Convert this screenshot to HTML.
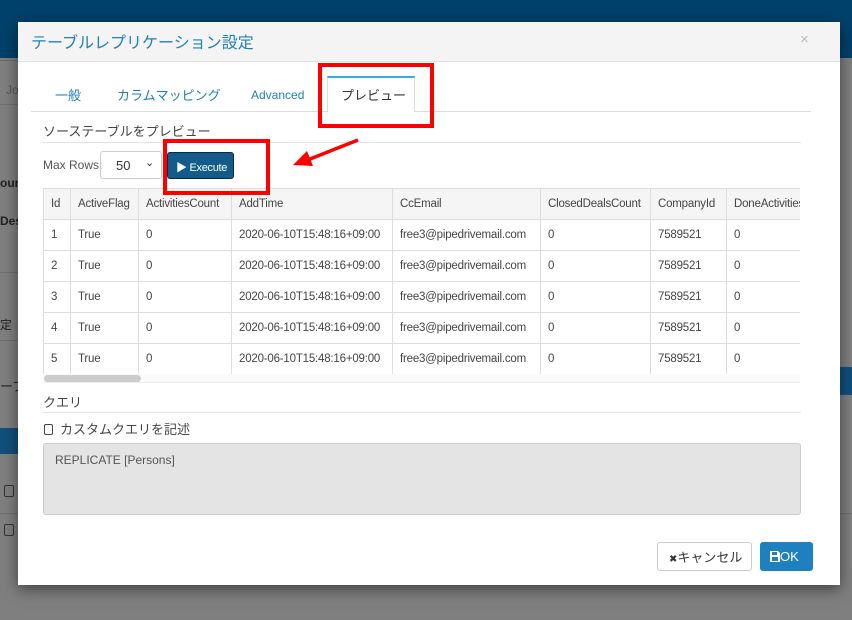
<!DOCTYPE html>
<html><head><meta charset="utf-8"><style>
*{box-sizing:border-box;margin:0;padding:0}
body{width:852px;height:620px;overflow:hidden;background:#7f7f7f;font-family:"Liberation Sans","Noto Sans CJK JP",sans-serif;font-size:12px;color:#333;position:relative}
.abs{position:absolute}
.top{left:0;top:0;width:852px;height:58px;background:#00416b}
.bgline{background:#6f6f6f;height:1px}
.modal{left:18px;top:22px;width:822px;height:563px;background:#fff;box-shadow:0 4px 14px rgba(0,0,0,.5)}
.hdr{left:0;top:0;width:822px;height:40px;background:#f4f4f4;border-bottom:1px solid #e2e2e2}
table{border-collapse:collapse;font-size:11.5px;color:#444;letter-spacing:-0.2px}
td{border:1px solid #ddd;height:31px;padding:0 7px;white-space:nowrap;overflow:hidden}
tr:first-child td{background:#f5f5f5}
.red{border:4px solid #f00}
</style></head><body>
<div class="abs top"></div>
<div class="abs" style="left:0;top:60px;width:18px;height:1px;background:#6d6d6d"></div>
<div class="abs" style="left:6px;top:83px;color:#555;font-size:12px">Jo</div>
<div class="abs bgline" style="left:0;top:104px;width:18px"></div>
<div class="abs" style="left:0;top:176px;color:#222;font-weight:bold;font-size:12px">our</div>
<div class="abs" style="left:0;top:214px;color:#222;font-weight:bold;font-size:12px">Dest</div>
<div class="abs bgline" style="left:0;top:272px;width:18px"></div>
<div class="abs" style="left:0;top:316px;color:#222">定</div>
<div class="abs bgline" style="left:0;top:340px;width:18px"></div>
<div class="abs" style="left:0;top:376px;color:#222;font-size:13px">ーブ</div>
<div class="abs" style="left:840px;top:367px;width:12px;height:28px;background:#10507c"></div>
<div class="abs" style="left:0;top:428px;width:18px;height:26px;background:#10507c"></div>
<div class="abs" style="left:4px;top:485px;width:10px;height:12px;border:1px solid #333;border-radius:2px"></div>
<div class="abs" style="left:4px;top:524px;width:10px;height:12px;border:1px solid #333;border-radius:2px"></div>
<div class="abs bgline" style="left:0;top:513px;width:18px"></div>
<div class="abs bgline" style="left:840px;top:513px;width:12px"></div>

<div class="abs modal">
 <div class="abs hdr"></div>
 <div class="abs" style="left:13px;top:7px;font-size:16px;color:#1e7fc0">テーブルレプリケーション設定</div>
 <div class="abs" style="left:782px;top:9px;font-size:15px;color:#bbb">×</div>
 <div class="abs" style="left:13px;top:89px;width:780px;height:1px;background:#ddd"></div>
 <div class="abs" style="left:37px;top:63px;font-size:13px;color:#1e7fc0">一般</div>
 <div class="abs" style="left:99px;top:63px;font-size:13px;color:#1e7fc0">カラムマッピング</div>
 <div class="abs" style="left:233px;top:66px;font-size:12px;color:#1e7fc0">Advanced</div>
 <div class="abs" style="left:309px;top:54px;width:88px;height:36px;background:#fff;border:1px solid #ddd;border-top:2px solid #3aa8e8;border-bottom:none"></div>
 <div class="abs" style="left:323px;top:63px;font-size:13px;color:#333">プレビュー</div>
 <div class="abs" style="left:25px;top:99px;font-size:13px;color:#444">ソーステーブルをプレビュー</div>
 <div class="abs" style="left:25px;top:120px;width:758px;height:1px;background:#e2e2e2"></div>
 <div class="abs" style="left:25px;top:136px;font-size:12px;color:#555">Max Rows:</div>
 <div class="abs" style="left:82px;top:129px;width:62px;height:28px;border:1px solid #ccc;border-radius:3px;padding:6px 0 0 15px;font-size:13px">50<span style="position:absolute;left:44px;top:4px;font-size:11px">&#8964;</span></div>
 <div class="abs" style="left:149px;top:130px;width:67px;height:27px;background:#135c8a;border:1px solid #0a2a40;border-radius:3px;color:#fff;font-size:11px;padding:6px 0 0 8px;letter-spacing:-0.3px">&#9654; Execute</div>
 <div class="abs" style="left:25px;top:166px;width:757px;height:186px;overflow:hidden">
  <table style="width:800px;table-layout:fixed">
   <colgroup><col style="width:27px"><col style="width:68px"><col style="width:93px"><col style="width:161px"><col style="width:148px"><col style="width:110px"><col style="width:76px"><col style="width:117px"></colgroup>
   <tr><td>Id</td><td>ActiveFlag</td><td>ActivitiesCount</td><td>AddTime</td><td>CcEmail</td><td>ClosedDealsCount</td><td>CompanyId</td><td>DoneActivities</td></tr>
   <tr><td>1</td><td>True</td><td>0</td><td>2020-06-10T15:48:16+09:00</td><td>free3@pipedrivemail.com</td><td>0</td><td>7589521</td><td>0</td></tr>
   <tr><td>2</td><td>True</td><td>0</td><td>2020-06-10T15:48:16+09:00</td><td>free3@pipedrivemail.com</td><td>0</td><td>7589521</td><td>0</td></tr>
   <tr><td>3</td><td>True</td><td>0</td><td>2020-06-10T15:48:16+09:00</td><td>free3@pipedrivemail.com</td><td>0</td><td>7589521</td><td>0</td></tr>
   <tr><td>4</td><td>True</td><td>0</td><td>2020-06-10T15:48:16+09:00</td><td>free3@pipedrivemail.com</td><td>0</td><td>7589521</td><td>0</td></tr>
   <tr><td>5</td><td>True</td><td>0</td><td>2020-06-10T15:48:16+09:00</td><td>free3@pipedrivemail.com</td><td>0</td><td>7589521</td><td>0</td></tr>
  </table>
 </div>
 <div class="abs" style="left:25px;top:352px;width:757px;height:9px;background:#fafafa;border-bottom:1px solid #eee"></div>
 <div class="abs" style="left:26px;top:353px;width:97px;height:7px;background:#ccc;border-radius:4px"></div>
 <div class="abs" style="left:25px;top:370px;font-size:13px;color:#444">クエリ</div>
 <div class="abs" style="left:25px;top:390px;width:758px;height:1px;background:#e2e2e2"></div>
 <div class="abs" style="left:26px;top:402px;width:9px;height:11px;border:1px solid #444;border-radius:2px"></div>
 <div class="abs" style="left:42px;top:397px;font-size:13px;color:#444">カスタムクエリを記述</div>
 <div class="abs" style="left:25px;top:421px;width:758px;height:72px;background:#e4e4e4;border:1px solid #ccc;border-radius:3px;padding:9px 11px;font-size:12px;color:#555">REPLICATE [Persons]</div>
 <div class="abs" style="left:639px;top:520px;width:95px;height:29px;border:1px solid #ccc;border-radius:3px;font-size:13px;color:#333;padding:4px 0 0 11px"><span style="font-size:10px">&#10006;</span>キャンセル</div>
 <div class="abs" style="left:742px;top:520px;width:53px;height:29px;background:#1f80c0;border-radius:3px;font-size:13px;color:#fff;padding:7px 0 0 10px"><svg width="10" height="11" style="vertical-align:-1px"><path d="M0 0h8l2 2v9H0z" fill="#fff"/><rect x="2" y="1" width="5" height="3" fill="#1f80c0"/><rect x="2" y="6" width="6" height="4" fill="#1f80c0"/></svg>OK</div>
</div>

<div class="abs red" style="left:318px;top:63px;width:116px;height:65px"></div>
<div class="abs red" style="left:163px;top:139px;width:107px;height:56px"></div>
<svg class="abs" style="left:285px;top:135px" width="80" height="40"><line x1="73" y1="5" x2="20" y2="26" stroke="#f00" stroke-width="3.5"/><polygon points="8,30 22,16 28,31" fill="#f00"/></svg>
</body></html>
